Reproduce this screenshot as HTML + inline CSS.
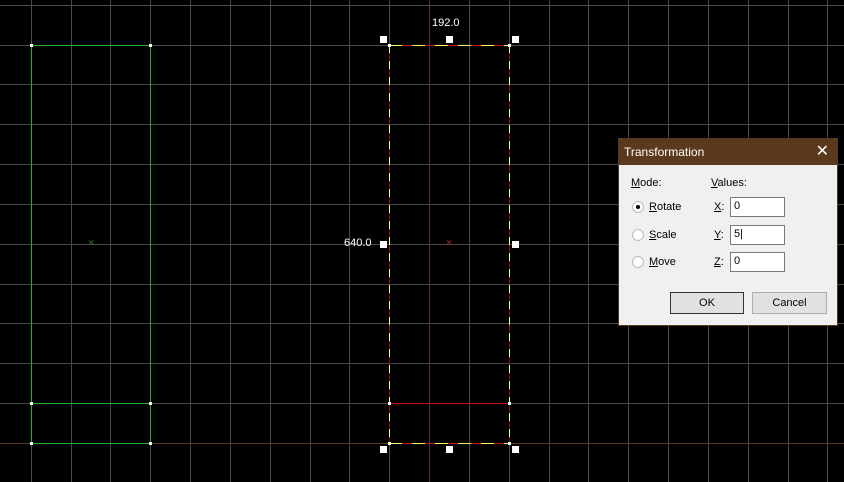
<!DOCTYPE html>
<html><head><meta charset="utf-8"><style>
html,body{margin:0;padding:0;background:#000;width:844px;height:482px;overflow:hidden;position:relative;font-family:"Liberation Sans",sans-serif}
.v,.h,.b{position:absolute}
.v{top:0;width:1px;height:482px;background:#4a4a4a}
.h{left:0;height:1px;width:844px;background:#4a4a4a}
.lbl{position:absolute;color:#fff;font-size:11px;font-family:"Liberation Sans",sans-serif}
.dlg{position:absolute;left:619px;top:139px;width:218px;height:186px;background:#f0f0f0;box-shadow:0 0 0 1px #5a3a1e;}
.tb{height:26px;background:#5b391c;color:#fff;font-size:12px;line-height:26px;padding-left:5px;position:relative}
.tb .x{position:absolute;right:8px;top:0;font-size:16px}
.d{position:absolute;font-size:11px;color:#000}
.u{text-decoration:underline}
.rad{position:absolute;width:10px;height:10px;border-radius:50%;background:#fff;border:1px solid #bbb}
.inp{position:absolute;width:55px;height:20px;background:#fff;border:1px solid #7a7a7a;box-sizing:border-box;font-size:11px;padding:2px 0 0 3px}
.btn{position:absolute;height:22px;background:#e1e1e1;border:1px solid #adadad;box-sizing:border-box;font-size:11px;text-align:center;line-height:20px}
.hd{position:absolute;background:#fff}
.x1{position:absolute;font-size:11px;line-height:11px}
</style></head><body>
<div class="v" style="left:31px"></div><div class="v" style="left:71px"></div><div class="v" style="left:110px"></div><div class="v" style="left:150px"></div><div class="v" style="left:190px"></div><div class="v" style="left:230px"></div><div class="v" style="left:270px"></div><div class="v" style="left:310px"></div><div class="v" style="left:349px"></div><div class="v" style="left:389px"></div><div class="v" style="left:469px"></div><div class="v" style="left:509px"></div><div class="v" style="left:549px"></div><div class="v" style="left:588px"></div><div class="v" style="left:628px"></div><div class="v" style="left:668px"></div><div class="v" style="left:708px"></div><div class="v" style="left:748px"></div><div class="v" style="left:788px"></div><div class="v" style="left:827px"></div>
<div class="h" style="top:5px"></div><div class="h" style="top:45px"></div><div class="h" style="top:84px"></div><div class="h" style="top:124px"></div><div class="h" style="top:164px"></div><div class="h" style="top:204px"></div><div class="h" style="top:244px"></div><div class="h" style="top:284px"></div><div class="h" style="top:323px"></div><div class="h" style="top:363px"></div><div class="h" style="top:403px"></div>
<div class="v" style="left:429px;background:#5a3626"></div>
<div class="h" style="top:443px;background:#5a3626"></div>
<!-- green rect -->
<div class="b" style="left:31px;top:45px;width:120px;height:1px;background:#22b022"></div>
<div class="b" style="left:31px;top:403px;width:120px;height:1px;background:#22b022"></div>
<div class="b" style="left:31px;top:443px;width:120px;height:1px;background:#22b022"></div>
<div class="b" style="left:31px;top:45px;width:1px;height:399px;background:#22b022"></div>
<div class="b" style="left:150px;top:45px;width:1px;height:399px;background:#22b022"></div>
<div class="hd" style="left:30px;top:44px;width:3px;height:3px"></div><div class="hd" style="left:149px;top:44px;width:3px;height:3px"></div>
<div class="hd" style="left:30px;top:402px;width:3px;height:3px"></div><div class="hd" style="left:149px;top:402px;width:3px;height:3px"></div>
<div class="hd" style="left:30px;top:442px;width:3px;height:3px"></div><div class="hd" style="left:149px;top:442px;width:3px;height:3px"></div>
<div class="x1" style="left:88px;top:238px;color:#2a7a2a">×</div>
<!-- selection -->
<div class="b" style="left:389px;top:403px;width:120px;height:1px;background:#d01010"></div>
<div class="b" style="left:389px;top:45px;width:121px;height:1px;background:repeating-linear-gradient(90deg,#ffff60 0 13px,#d01010 13px 23px)"></div>
<div class="b" style="left:389px;top:443px;width:121px;height:1px;background:repeating-linear-gradient(90deg,#ffff60 0 13px,#d01010 13px 23px)"></div>
<div class="b" style="left:389px;top:45px;width:1px;height:399px;background:repeating-linear-gradient(180deg,#ffff60 0 8px,#8a1010 8px 16px)"></div>
<div class="b" style="left:509px;top:45px;width:1px;height:399px;background:repeating-linear-gradient(180deg,#ffff60 0 8px,#8a1010 8px 16px)"></div>
<div class="hd" style="left:388px;top:44px;width:3px;height:3px"></div><div class="hd" style="left:508px;top:44px;width:3px;height:3px"></div>
<div class="hd" style="left:388px;top:402px;width:3px;height:3px"></div><div class="hd" style="left:508px;top:402px;width:3px;height:3px"></div>
<div class="hd" style="left:388px;top:442px;width:3px;height:3px"></div><div class="hd" style="left:508px;top:442px;width:3px;height:3px"></div>
<div class="hd" style="left:380px;top:36px;width:7px;height:7px"></div><div class="hd" style="left:446px;top:36px;width:7px;height:7px"></div><div class="hd" style="left:512px;top:36px;width:7px;height:7px"></div>
<div class="hd" style="left:380px;top:241px;width:7px;height:7px"></div><div class="hd" style="left:512px;top:241px;width:7px;height:7px"></div>
<div class="hd" style="left:380px;top:446px;width:7px;height:7px"></div><div class="hd" style="left:446px;top:446px;width:7px;height:7px"></div><div class="hd" style="left:512px;top:446px;width:7px;height:7px"></div>
<div class="x1" style="left:446px;top:238px;color:#b02020">×</div>
<div class="lbl" style="left:432px;top:17px">192.0</div>
<div class="lbl" style="left:344px;top:237px">640.0</div>
<div class="dlg">
<div class="tb">Transformation<span class="x">✕</span></div>
<div class="d" style="left:12px;top:38px"><span class="u">M</span>ode:</div>
<div class="d" style="left:92px;top:38px"><span class="u">V</span>alues:</div>
<div class="rad" style="left:13px;top:62px"><div style="position:absolute;left:3px;top:3px;width:4px;height:4px;border-radius:50%;background:#000"></div></div>
<div class="rad" style="left:13px;top:90px"></div>
<div class="rad" style="left:13px;top:117px"></div>
<div class="d" style="left:30px;top:62px"><span class="u">R</span>otate</div>
<div class="d" style="left:30px;top:90px"><span class="u">S</span>cale</div>
<div class="d" style="left:30px;top:117px"><span class="u">M</span>ove</div>
<div class="d" style="left:95px;top:62px"><span class="u">X</span>:</div>
<div class="d" style="left:95px;top:90px"><span class="u">Y</span>:</div>
<div class="d" style="left:95px;top:117px"><span class="u">Z</span>:</div>
<div class="inp" style="left:111px;top:58px">0</div>
<div class="inp" style="left:111px;top:86px">5|</div>
<div class="inp" style="left:111px;top:113px">0</div>
<div class="btn" style="left:51px;top:153px;width:74px;border:1px solid #333">OK</div>
<div class="btn" style="left:133px;top:153px;width:75px">Cancel</div>
</div>
</body></html>
